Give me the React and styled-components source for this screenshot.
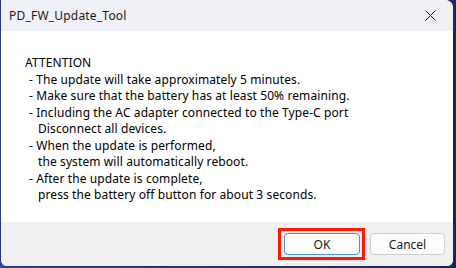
import React from "react";
import styled, { createGlobalStyle } from "styled-components";

const Global = createGlobalStyle`
  html, body {
    margin: 0;
    padding: 0;
    width: 456px;
    height: 268px;
    overflow: hidden;
    background: linear-gradient(90deg, #2a4bb0, #1b3590 60%, #14256a);
  }
`;

const Desktop = styled.div`
  width: 456px;
  height: 268px;
  padding: 0 3px 2px 1px;
  box-sizing: border-box;
  display: flex;
`;

const Window = styled.div`
  flex: 1;
  display: flex;
  flex-direction: column;
  background: #fff;
  border-radius: 0 8px 6px 6px;
  overflow: hidden;
  box-shadow: 0 0 0 1px rgba(40, 40, 60, 0.45);
  font-family: "Segoe UI", "Noto Sans", "Open Sans", sans-serif;
  letter-spacing: 0.1px;
  color: #000;
`;

const TitleBar = styled.div`
  height: 31px;
  flex: none;
  background: #eff1f6;
  display: flex;
  align-items: center;
  justify-content: space-between;
  padding: 0 0 0 8px;
`;

const Title = styled.span`
  font-size: 12px;
  letter-spacing: 0.2px;
  color: #1a1a1a;
`;

const CloseButton = styled.div`
  width: 46px;
  height: 31px;
  display: flex;
  align-items: center;
  justify-content: center;
  color: #222;
`;

const Body = styled.div`
  flex: 1;
  padding: 24px 0 0 24px;
  font-size: 12px;
  line-height: 16.5px;
`;

const Line = styled.div`
  white-space: pre;
  padding-left: ${(p) => p.indent}px;
`;

const Footer = styled.div`
  height: 44px;
  flex: none;
  background: #f0f0f0;
  display: flex;
  align-items: center;
  justify-content: flex-end;
  gap: 5px;
  padding: 0 8px 0 0;
`;

const Highlight = styled.div`
  display: flex;
  border: 3px solid #ff1a00;
  padding: 2px 2px 2px 3px;
`;

const Button = styled.button`
  width: ${(p) => p.w}px;
  height: 22px;
  box-sizing: border-box;
  background: #fdfdfd;
  border: 1px solid ${(p) => (p.primary ? "#4a90d9" : "#d0d0d0")};
  border-radius: 4px;
  font-family: inherit;
  font-size: 12px;
  color: #1a1a1a;
  padding: 0;
`;

const lines = [
  { text: "ATTENTION", indent: 0 },
  { text: "- The update will take approximately 5 minutes.", indent: 4 },
  { text: "- Make sure that the battery has at least 50% remaining.", indent: 4 },
  { text: "- Including the AC adapter connected to the Type-C port", indent: 4 },
  { text: "Disconnect all devices.", indent: 13 },
  { text: "- When the update is performed,", indent: 4 },
  { text: "the system will automatically reboot.", indent: 13 },
  { text: "- After the update is complete,", indent: 4 },
  { text: "press the battery off button for about 3 seconds.", indent: 13 },
];

export default function App() {
  return (
    <>
      <Global />
      <Desktop>
        <Window>
          <TitleBar>
            <Title>PD_FW_Update_Tool</Title>
            <CloseButton>
              <svg width="11" height="11" viewBox="0 0 11 11">
                <path d="M0.5 0.5L10.5 10.5M10.5 0.5L0.5 10.5" stroke="#222" strokeWidth="1" />
              </svg>
            </CloseButton>
          </TitleBar>
          <Body>
            {lines.map((l, i) => (
              <Line key={i} indent={l.indent}>
                {l.text}
              </Line>
            ))}
          </Body>
          <Footer>
            <Highlight>
              <Button w={76} primary>
                OK
              </Button>
            </Highlight>
            <Button w={75}>Cancel</Button>
          </Footer>
        </Window>
      </Desktop>
    </>
  );
}
